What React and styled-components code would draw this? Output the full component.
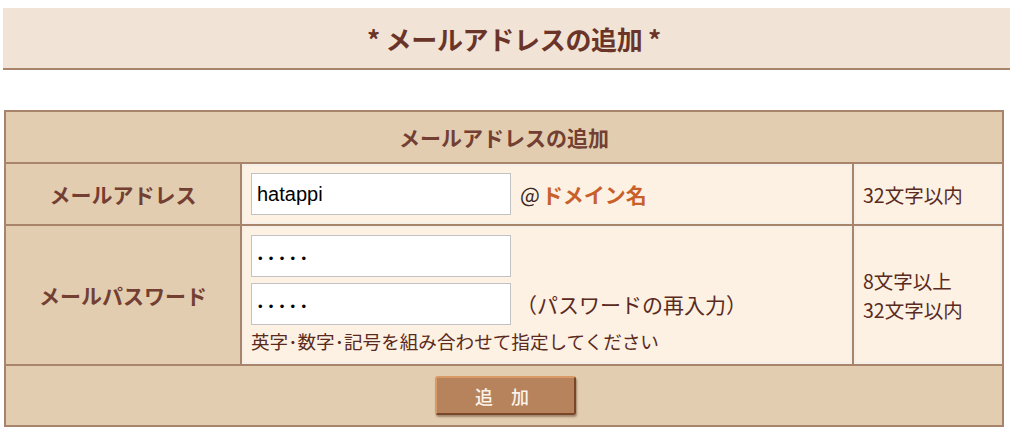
import React from 'react'
import styled, { createGlobalStyle } from 'styled-components'

const GlobalStyle = createGlobalStyle`
    html, body {
        margin: 0;
        padding: 0;
        overflow: hidden;
        background: #ffffff;
    }
    body {
        font-family: "Noto Sans CJK JP", "Noto Sans", sans-serif;
    }
`

const Page = styled.div`
    padding-top: 8px;
    width: 1010px;
`

const TitleBar = styled.h1`
    margin: 0 0 0 3px;
    width: 1022px;
    height: 60px;
    box-sizing: content-box;
    display: flex;
    align-items: center;
    justify-content: center;
    background: #f1e3d5;
    border-bottom: 2px solid #a8846a;
    color: #6a3428;
    font-size: 26px;
    font-weight: 700;
    letter-spacing: -0.3px;
`

const FormGrid = styled.div`
    margin: 40px 0 0 4px;
    width: 1000px;
    box-sizing: border-box;
    display: grid;
    grid-template-columns: 234px 610px 148px;
    grid-template-rows: 50px 60px 138px 59px;
    gap: 2px;
    border: 2px solid #a8846a;
    background: #a8846a;
`

const HeadCell = styled.div`
    grid-column: 1 / -1;
    display: flex;
    align-items: center;
    justify-content: center;
    background: #e3cdb0;
    color: #733f33;
    font-size: 21px;
    font-weight: 700;
`

const LabelCell = styled.div`
    display: flex;
    align-items: center;
    justify-content: center;
    background: #e3cdb0;
    color: #733f33;
    font-size: 21px;
    font-weight: 700;
`

const DataCell = styled.div`
    display: flex;
    flex-direction: ${p => (p.$stack ? 'column' : 'row')};
    align-items: ${p => (p.$stack ? 'flex-start' : 'center')};
    gap: ${p => (p.$stack ? '6px' : '0')};
    padding: ${p => (p.$stack ? '9px 9px 0' : '0 9px')};
    background: #fdf1e4;
    box-shadow: inset 0 0 0 2px #f6efe8;
    color: #5a2a20;
`

const NoteCell = styled.div`
    display: flex;
    flex-direction: column;
    justify-content: center;
    padding-left: 9px;
    background: #fdf1e4;
    box-shadow: inset 0 0 0 2px #f6efe8;
    color: #5a2a20;
    font-size: 19.5px;
    line-height: 29px;
`

const InputRow = styled.div`
    display: flex;
    align-items: center;
`

const TextInput = styled.input`
    width: 260px;
    height: 42px;
    box-sizing: border-box;
    padding: ${p => (p.type === 'password' ? '4px 0 0 6px' : '0 5px')};
    border: 1px solid #c2c2c2;
    background: #ffffff;
    color: #000000;
    font-family: "Liberation Sans", "Noto Sans", sans-serif;
    font-size: ${p => (p.type === 'password' ? '13px' : '20px')};
    letter-spacing: ${p => (p.type === 'password' ? '6.3px' : '0')};
    outline: none;
`

const AtMark = styled.span`
    margin-left: 9px;
    font-size: 21px;
    color: #3a2a24;
`

const Domain = styled.span`
    margin-left: 2px;
    font-size: 21px;
    font-weight: 700;
    color: #c8602a;
`

const Reenter = styled.span`
    margin-left: 5px;
    font-size: 21px;
    color: #5a2a20;
`

const Hint = styled.div`
    margin-top: -4px;
    font-size: 18.6px;
    color: #5a2a20;
`

const ButtonCell = styled.div`
    grid-column: 1 / -1;
    display: flex;
    align-items: center;
    justify-content: center;
    background: #e3cdb0;
`

const SubmitButton = styled.button`
    width: 141px;
    height: 39px;
    margin-left: 2px;
    box-sizing: border-box;
    background: #b6835d;
    border: 2px solid;
    border-color: #d99a66 #7a4628 #7a4628 #d99a66;
    border-radius: 3px;
    box-shadow: 1px 2px 2px rgba(80, 50, 30, 0.45);
    color: #fbf3ea;
    font-family: "Noto Sans CJK JP", sans-serif;
    font-size: 18px;
    font-weight: 500;
    letter-spacing: 18px;
    padding-left: 18px;
    cursor: pointer;
`

const App = () => {
    return (
        <Page>
            <GlobalStyle />
            <TitleBar>* メールアドレスの追加 *</TitleBar>
            <FormGrid>
                <HeadCell>メールアドレスの追加</HeadCell>

                <LabelCell>メールアドレス</LabelCell>
                <DataCell>
                    <TextInput type="text" defaultValue="hatappi" />
                    <AtMark>@</AtMark>
                    <Domain>ドメイン名</Domain>
                </DataCell>
                <NoteCell>32文字以内</NoteCell>

                <LabelCell>メールパスワード</LabelCell>
                <DataCell $stack>
                    <TextInput type="password" defaultValue="12345" />
                    <InputRow>
                        <TextInput type="password" defaultValue="12345" />
                        <Reenter>（パスワードの再入力）</Reenter>
                    </InputRow>
                    <Hint>英字･数字･記号を組み合わせて指定してください</Hint>
                </DataCell>
                <NoteCell>
                    <span>8文字以上</span>
                    <span>32文字以内</span>
                </NoteCell>

                <ButtonCell>
                    <SubmitButton type="button">追加</SubmitButton>
                </ButtonCell>
            </FormGrid>
        </Page>
    )
}

export default App
